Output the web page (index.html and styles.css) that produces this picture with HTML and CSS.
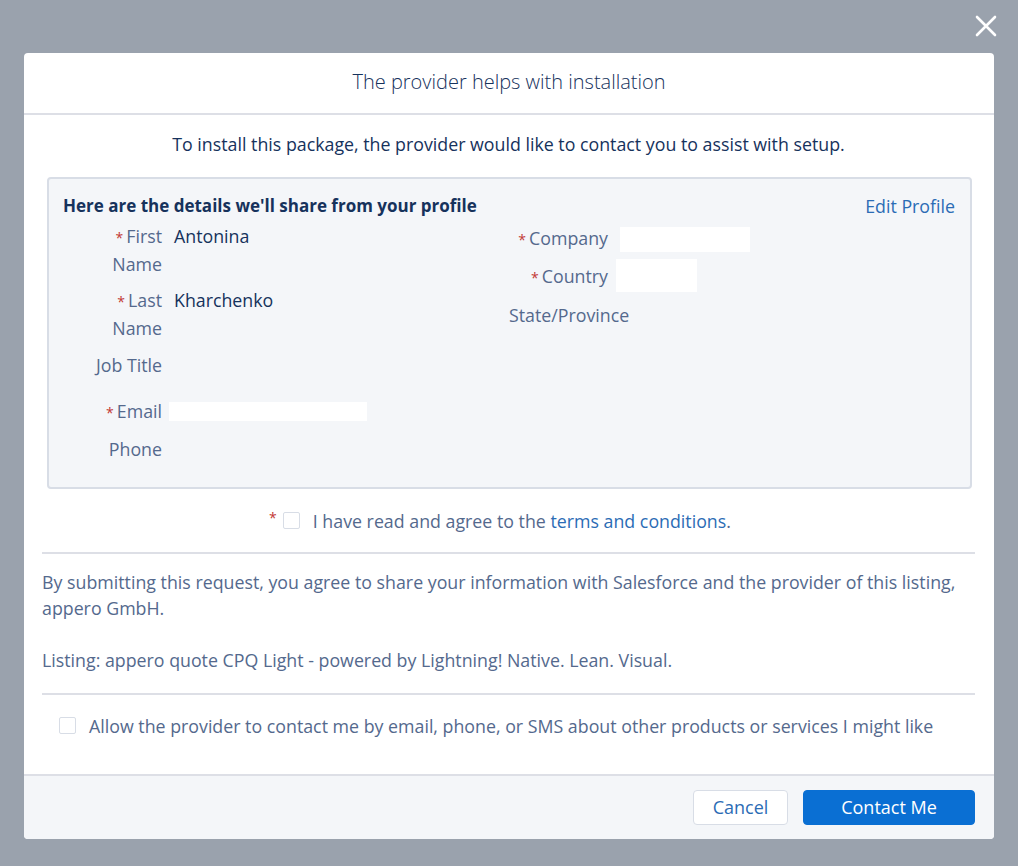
FILE: index.html
```html
<!DOCTYPE html>
<html lang="en">
<head>
<meta charset="utf-8">
<title>The provider helps with installation</title>
<link rel="stylesheet" href="styles.css">
</head>
<body>
<button class="close" aria-label="Close">
  <svg width="22" height="22" viewBox="0 0 22 22"><path d="M2 2 L20 20 M20 2 L2 20" stroke="#fff" stroke-width="2.6" stroke-linecap="round"/></svg>
</button>
<div class="modal">
  <header class="modal-header">
    <h2 class="title">The provider helps with installation</h2>
  </header>
  <div class="modal-body">
    <p class="intro">To install this package, the provider would like to contact you to assist with setup.</p>
    <section class="details">
      <div class="details-head">
        <h3 class="details-title">Here are the details we'll share from your profile</h3>
        <a class="link" href="#">Edit Profile</a>
      </div>
      <div class="cols">
        <div class="col">
          <div class="row"><span class="label required">First Name</span><span class="value">Antonina</span></div>
          <div class="row"><span class="label required">Last Name</span><span class="value">Kharchenko</span></div>
          <div class="row row-job"><span class="label">Job Title</span><span class="value"></span></div>
          <div class="row row-email"><span class="label required">Email</span><span class="value"><span class="redact redact-email"></span></span></div>
          <div class="row row-phone"><span class="label">Phone</span><span class="value"></span></div>
        </div>
        <div class="col col-right">
          <div class="row"><span class="label required">Company</span><span class="value"><span class="redact redact-company"></span></span></div>
          <div class="row"><span class="label required">Country</span><span class="value"><span class="redact redact-country"></span></span></div>
          <div class="row"><span class="label label-wide">State/Province</span><span class="value"></span></div>
        </div>
      </div>
    </section>
    <div class="terms">
      <label class="check-label required-check"><span class="checkbox"></span><span>I have read and agree to the <a class="link" href="#">terms and conditions</a>.</span></label>
    </div>
    <div class="legal">
      <p>By submitting this request, you agree to share your information with Salesforce and the provider of this listing, appero GmbH.</p>
      <p>Listing: appero quote CPQ Light - powered by Lightning! Native. Lean. Visual.</p>
    </div>
    <div class="optin">
      <label class="check-label"><span class="checkbox"></span><span>Allow the provider to contact me by email, phone, or SMS about other products or services I might like</span></label>
    </div>
  </div>
  <footer class="modal-footer">
    <button class="btn btn-neutral">Cancel</button>
    <button class="btn btn-brand">Contact Me</button>
  </footer>
</div>
</body>
</html>
```
FILE: styles.css
```css
* { box-sizing: border-box; }
html, body { margin: 0; padding: 0; }
body {
  background: #9aa2ad;
  font-family: "Open Sans", "Noto Sans", Arial, sans-serif;
  font-size: 17.8px;
  color: #16325c;
  min-height: 866px;
  padding-top: 53px;
  position: relative;
}
.close {
  position: absolute;
  top: 15px;
  left: 975px;
  width: 22px;
  height: 22px;
  padding: 0;
  border: 0;
  background: none;
  cursor: pointer;
}
.close svg { display: block; }
.modal {
  width: 970px;
  margin: 0 auto;
  background: #fff;
  border-radius: 4px;
  overflow: hidden;
}
.modal-header {
  height: 62px;
  border-bottom: 2px solid #dddfe6;
  display: flex;
  align-items: center;
  justify-content: center;
  padding-bottom: 3px;
}
.title {
  margin: 0;
  font-size: 20px;
  font-weight: 300;
  color: #16325c;
}
.modal-body {
  padding: 17px 19px 36px 18px;
}
.intro {
  margin: 0;
  text-align: center;
  line-height: 24px;
  color: #16325c;
}
.details {
  margin: 21px 3px 0 5px;
  background: #f4f6f9;
  border: 2px solid #d8dde6;
  border-radius: 4px;
  padding: 15px 15px 23px 14px;
}
.details-head {
  display: flex;
  justify-content: space-between;
  align-items: center;
  line-height: 24px;
}
.details-title {
  margin: 0;
  font-size: 17px;
  font-weight: 700;
  color: #16325c;
}
.link {
  color: #2b6cb5;
  text-decoration: none;
}
.cols {
  display: grid;
  grid-template-columns: 1fr 1fr;
  margin-top: 5px;
}
.col {
  display: flex;
  flex-direction: column;
  gap: 9px;
}
.col-right { padding-top: 2px; gap: 10px; }
.row {
  display: flex;
  align-items: flex-start;
  line-height: 27.5px;
}
.row-job { margin-top: 1px; }
.row-email { margin-top: 9px; }
.row-phone { margin-top: 2px; }
.label {
  width: 99px;
  padding-left: 4px;
  flex: none;
  text-align: right;
  color: #54698d;
}
.required::before {
  content: "*";
  color: #c23934;
  font-size: 14px;
  line-height: 1;
  margin-right: 3px;
}
.label-wide { white-space: nowrap; margin-left: -4px; }
.value {
  margin-left: 12px;
  color: #16325c;
  min-height: 27.5px;
  display: flex;
  align-items: center;
}
.redact { display: block; background: #fff; }
.redact-company { width: 130px; height: 25px; margin-top: 1px; }
.redact-country { width: 81px; height: 33px; margin-top: -4px; margin-left: -4px; }
.redact-email { width: 198px; height: 19px; margin-left: -5px; }
.terms {
  display: flex;
  justify-content: center;
  margin-top: 20px;
  padding-bottom: 19px;
  border-bottom: 2px solid #dddfe6;
}
.check-label {
  display: flex;
  align-items: center;
  line-height: 24px;
  color: #54698d;
}
.required-check::before {
  content: "*";
  color: #c23934;
  font-size: 14px;
  line-height: 18px;
  align-self: flex-start;
  margin-left: -17px;
  margin-right: 6px;
}
.checkbox {
  width: 17px;
  height: 17px;
  flex: none;
  border: 1px solid #d8dde6;
  border-radius: 2px;
  background: #fff;
  margin-right: 13px;
}
.legal {
  padding: 15px 0 20px;
  border-bottom: 2px solid #dddfe6;
  color: #54698d;
}
.legal p { margin: 0; line-height: 26px; }
.legal p + p { margin-top: 26px; }
.optin {
  padding: 19px 0 0 17px;
}
.modal-footer {
  background: #f4f6f9;
  border-top: 2px solid #dddfe6;
  display: flex;
  justify-content: flex-end;
  gap: 15px;
  padding: 14px 19px 14px;
}
.btn {
  font-family: inherit;
  font-size: 18px;
  height: 35px;
  border-radius: 4px;
  cursor: pointer;
}
.btn-neutral {
  width: 95px;
  background: #fff;
  border: 1px solid #d8dde6;
  color: #2b6cb5;
}
.btn-brand {
  width: 172px;
  background: #0a6fd3;
  border: 1px solid #0a6fd3;
  color: #fff;
}
```
